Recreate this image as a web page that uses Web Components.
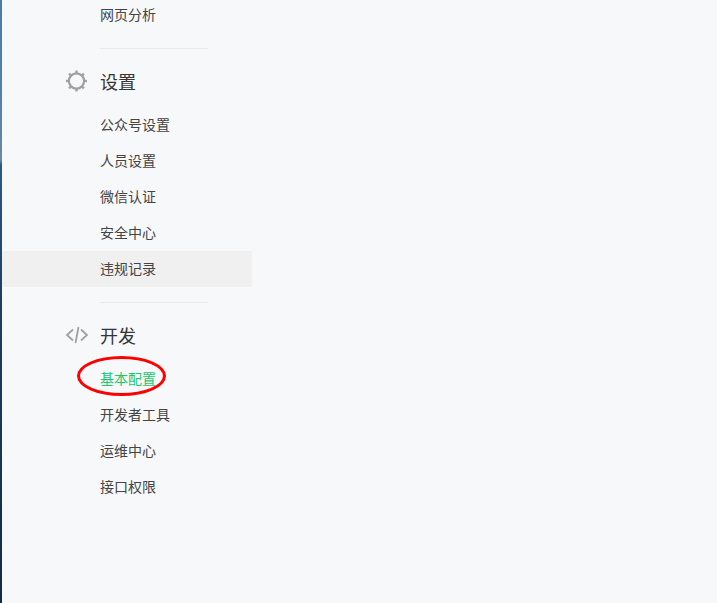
<!DOCTYPE html>
<html lang="zh">
<head>
<meta charset="utf-8">
<title>菜单</title>
<style>
  html, body { margin: 0; height: 100%; overflow: hidden; }
  body { background: #f7f8fa; font-family: "Noto Sans CJK SC", "Liberation Sans", sans-serif; }
</style>
</head>
<body>
<side-menu>
  <menu-item>网页分析</menu-item>
  <menu-group label="设置" icon="gear">
    <menu-item>公众号设置</menu-item>
    <menu-item>人员设置</menu-item>
    <menu-item>微信认证</menu-item>
    <menu-item>安全中心</menu-item>
    <menu-item hover>违规记录</menu-item>
  </menu-group>
  <menu-group label="开发" icon="code">
    <menu-item active circled>基本配置</menu-item>
    <menu-item>开发者工具</menu-item>
    <menu-item>运维中心</menu-item>
    <menu-item>接口权限</menu-item>
  </menu-group>
</side-menu>
<edge-strip></edge-strip>
<script>
const teeth = [0, 45, 90, 135, 180, 225, 270, 315]
  .map(a => `<rect x="11.300" y="1.500" width="2.400" height="3" transform="rotate(${a} 12.500 12)"/>`).join('');
const icons = {
  gear: `<svg width="24" height="24" viewBox="0 0 24 24" fill="none">
    <circle cx="12.500" cy="12" r="7.600" stroke="#a0a0a0" stroke-width="2.200"/>
    <g fill="#a0a0a0">${teeth}</g></svg>`,
  code: `<svg width="24" height="24" viewBox="0 0 24 24" fill="none" stroke="#a0a0a0" stroke-width="1.800">
    <path d="M9 6.500 3 12 9 17.500M17 6.500 23 12 17 17.500M14.500 4 11.500 20"/></svg>`
};

customElements.define('side-menu', class extends HTMLElement {
  connectedCallback() {
    this.attachShadow({mode: 'open'});
    this.shadowRoot.innerHTML = `
    <style>
      :host { display: block; width: 250px; margin-left: 2px; margin-top: -3px; }
    </style>
    <slot></slot>`;
  }
});

customElements.define('menu-group', class extends HTMLElement {
  connectedCallback() {
    this.attachShadow({mode: 'open'});
    this.shadowRoot.innerHTML = `
    <style>
      :host { display: block; padding-top: 15px; }
      .rule { height: 1px; background: #e7eaec; margin-left: 98px; width: 108px; }
      .head { display: flex; align-items: center; height: 34px; margin-top: 15px; margin-bottom: 9px; padding-left: 62px; }
      .ico { width: 24px; height: 24px; margin-right: 12px; display: flex; }
      .txt { font-size: 18px; line-height: 34px; color: #353535; }
    </style>
    <div class="rule"></div>
    <div class="head"><span class="ico">${icons[this.getAttribute('icon')]}</span><span class="txt">${this.getAttribute('label')}</span></div>
    <slot></slot>`;
  }
});

customElements.define('menu-item', class extends HTMLElement {
  connectedCallback() {
    this.attachShadow({mode: 'open'});
    this.shadowRoot.innerHTML = `
    <style>
      :host { display: block; height: 36px; line-height: 34px; padding-left: 98px; font-size: 14px; color: #444; }
      :host([hover]) { background: #f0f0f1; }
      :host([active]) { color: #1ac86c; }
      span { position: relative; display: inline-block; }
      .ring { position: absolute; left: -23px; top: -5px; width: 83px; height: 34px;
              border: 3px solid #f00; border-radius: 50%; }
    </style>
    <span><slot></slot>${this.hasAttribute('circled') ? '<i class="ring"></i>' : ''}</span>`;
  }
});

customElements.define('edge-strip', class extends HTMLElement {
  connectedCallback() {
    this.attachShadow({mode: 'open'});
    this.shadowRoot.innerHTML = `
    <style>
      :host { position: absolute; left: 0; top: 0; bottom: 0; width: 2px;
              background: linear-gradient(#4a7ba7 0, #5b84a8 130px, #6d8aa3 160px, #2d5a82 165px, #1d3f62 300px, #0f2d4a 100%); }
    </style>`;
  }
});
</script>
</body>
</html>
